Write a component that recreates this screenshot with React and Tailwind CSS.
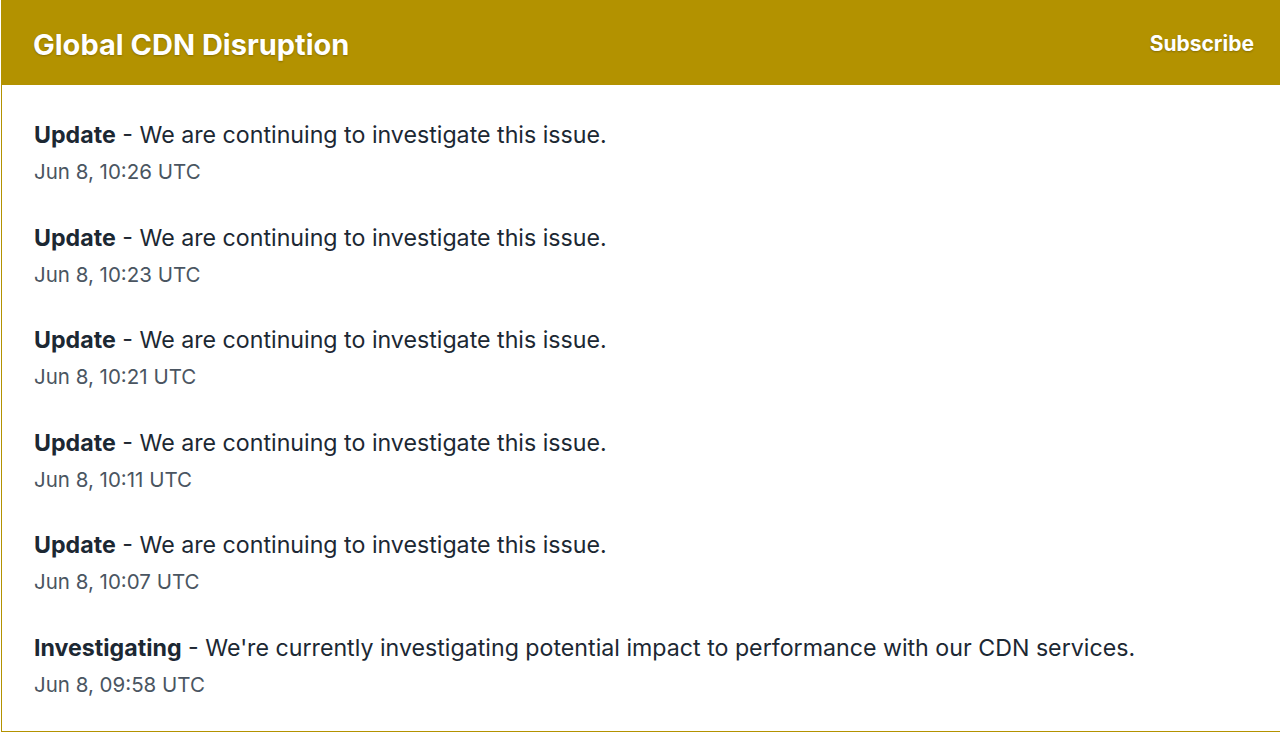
import React from "react";

const updates = [
  { status: "Update", body: "We are continuing to investigate this issue.", time: "Jun 8, 10:26 UTC" },
  { status: "Update", body: "We are continuing to investigate this issue.", time: "Jun 8, 10:23 UTC" },
  { status: "Update", body: "We are continuing to investigate this issue.", time: "Jun 8, 10:21 UTC" },
  { status: "Update", body: "We are continuing to investigate this issue.", time: "Jun 8, 10:11 UTC" },
  { status: "Update", body: "We are continuing to investigate this issue.", time: "Jun 8, 10:07 UTC" },
  {
    status: "Investigating",
    body: "We're currently investigating potential impact to performance with our CDN services.",
    time: "Jun 8, 09:58 UTC",
  },
];

export default function App() {
  return (
    <div className="min-h-screen bg-white" style={{ fontFamily: "Inter, 'Noto Sans', sans-serif" }}>
      <div className="ml-[1px] h-[732px] w-[1290px] overflow-hidden border-b border-l border-[#b39200]">
        {/* header */}
        <div className="flex h-[85px] items-center justify-between bg-[#b39200] pl-[31px] pr-[37px]">
          <h1 className="pt-[4px] text-[29px] font-bold text-white [text-shadow:0_1px_2px_rgba(0,0,0,0.25)]">
            Global CDN Disruption
          </h1>
          <button className="mt-[2px] text-[21px] font-bold text-white [text-shadow:0_1px_2px_rgba(0,0,0,0.25)]">
            Subscribe
          </button>
        </div>

        {/* incident updates */}
        <div className="flex flex-col pl-[32px] pt-[34px]">
          {updates.map((u, i) => (
            <div key={i} className="h-[102.5px]">
              <div className="text-[23.2px] leading-[32px] text-[#1c2833]">
                <strong className="font-bold">{u.status}</strong>
                <span> - {u.body}</span>
              </div>
              <div className="mt-[9px] text-[20.5px] leading-[24px] text-[#4a5561]">{u.time}</div>
            </div>
          ))}
        </div>
      </div>
    </div>
  );
}
